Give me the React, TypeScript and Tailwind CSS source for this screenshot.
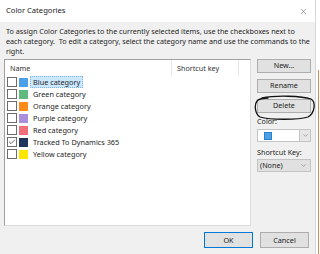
import { ChevronDown, X, Check } from 'lucide-react';

const categories = [
  { name: 'Blue category', color: 'bg-[#4ba0e8]', checked: false, selected: true },
  { name: 'Green category', color: 'bg-[#5fba7d]', checked: false },
  { name: 'Orange category', color: 'bg-[#ff8c1a]', checked: false },
  { name: 'Purple category', color: 'bg-[#a990dd]', checked: false },
  { name: 'Red category', color: 'bg-[#f1707b]', checked: false },
  { name: 'Tracked To Dynamics 365', color: 'bg-[#1f355e]', checked: true },
  { name: 'Yellow category', color: 'bg-[#ffe600]', checked: false },
];

function SideButton({ label }: { label: string }) {
  return (
    <button className="h-[14px] w-[54px] bg-[#e1e1e1] border border-[#adadad] text-[7.2px] leading-none text-[#222] flex items-center justify-center">
      {label}
    </button>
  );
}

export default function App() {
  return (
    <div className="w-[320px] h-[254px] bg-white flex overflow-hidden text-[#1e1e1e]" style={{ fontFamily: '"Noto Sans", "Open Sans", sans-serif' }}>
      <div className="w-[316px] h-full flex flex-col border-r border-[#d8d8d8]">
        {/* title bar */}
        <div className="h-[22px] bg-white flex items-center justify-between pl-[6px] pr-[7px] shrink-0">
          <span className="text-[7.6px] text-[#222]">Color Categories</span>
          <X className="w-[9px] h-[9px] text-[#444]" strokeWidth={1.2} />
        </div>

        <div className="flex-1 bg-[#f0f0f0] flex flex-col px-[4px]">
          <p className="mt-[4px] pl-[2px] text-[7.2px] leading-[10px] text-[#1e1e1e] whitespace-nowrap">
            To assign Color Categories to the currently selected items, use the checkboxes next to
            <br />
            each category.&nbsp; To edit a category, select the category name and use the commands to the
            <br />
            right.
          </p>

          <div className="mt-[3px] flex">
            {/* list */}
            <div className="w-[249px] h-[167px] bg-white border border-[#a0a0a0] border-r-[#dcdcdc] border-b-[#dcdcdc] flex flex-col">
              <div className="h-[16px] flex text-[7.2px] text-[#333] shrink-0">
                <div className="w-[167px] border-r border-[#e5e5e5] flex items-center pl-[5px]">Name</div>
                <div className="w-[67px] border-r border-[#e5e5e5] flex items-center pl-[5px]">Shortcut key</div>
              </div>
              <div className="flex flex-col">
                {categories.map((c) => (
                  <div key={c.name} className="h-[12px] flex items-center pl-[2px]">
                    <div className="w-[10px] h-[10px] border border-[#6d6d6d] bg-white flex items-center justify-center">
                      {c.checked && <Check className="w-[8px] h-[8px] text-[#222]" strokeWidth={2} />}
                    </div>
                    <div className={`ml-[2px] w-[9px] h-[9px] ${c.color}`} />
                    <span
                      className={`ml-[2px] h-[12px] flex items-center px-[2px] text-[7.3px] ${
                        c.selected ? 'bg-[#cce8ff] border border-dotted border-[#7fb6e0]' : 'border border-transparent'
                      }`}
                    >
                      {c.name}
                    </span>
                  </div>
                ))}
              </div>
            </div>

            {/* right column */}
            <div className="ml-[6px] w-[54px] flex flex-col relative">
              <div className="flex flex-col gap-[6px]">
                <SideButton label="New..." />
                <SideButton label="Rename" />
                <SideButton label="Delete" />
              </div>
              <span className="mt-[3px] text-[7.2px] leading-[10px] text-[#222]">Color:</span>
              <div className="mt-[3px] h-[13px] w-[54px] bg-white border border-[#c4c4c4] flex">
                <div className="flex-1 flex items-center pl-[6px]">
                  <div className="w-[8px] h-[8px] bg-[#4ba0e8] border border-[#2f7fc4]" />
                </div>
                <div className="w-[11px] bg-[#e6e6e6] border-l border-[#c4c4c4] flex items-center justify-center">
                  <ChevronDown className="w-[7px] h-[7px] text-[#555]" strokeWidth={1.5} />
                </div>
              </div>
              <span className="mt-[5px] text-[7.2px] leading-[10px] text-[#222]">Shortcut Key:</span>
              <div className="mt-[2px] h-[13px] w-[54px] bg-[#e1e1e1] border border-[#c4c4c4] flex items-center justify-between pl-[2px] pr-[3px]">
                <span className="text-[7.2px] text-[#222]">(None)</span>
                <ChevronDown className="w-[7px] h-[7px] text-[#555]" strokeWidth={1.5} />
              </div>

              {/* hand drawn circle around Delete */}
              <svg className="absolute left-[-3px] top-[36px]" width="62" height="26" viewBox="0 0 62 26" fill="none">
                <path
                  d="M8 3 C22 0 48 1 57 4 C62 7 61 18 54 22 C44 25 16 25 6 22 C1 19 0 10 3 6 C5 4 9 3 14 3"
                  stroke="#111"
                  strokeWidth="1.3"
                  strokeLinecap="round"
                />
              </svg>
            </div>
          </div>

          {/* bottom buttons */}
          <div className="mt-[6px] flex justify-end gap-[7px] pr-[2px]">
            <button className="h-[16px] w-[49px] bg-[#e1e1e1] border border-[#0078d7] text-[7.3px] text-[#222]">OK</button>
            <button className="h-[16px] w-[49px] bg-[#e1e1e1] border border-[#adadad] text-[7.3px] text-[#222]">Cancel</button>
          </div>
        </div>
      </div>
      <div className="flex-1 flex justify-center pt-[70px]">
        <div className="w-px h-full bg-[#c98a5c]" />
      </div>
    </div>
  );
}
